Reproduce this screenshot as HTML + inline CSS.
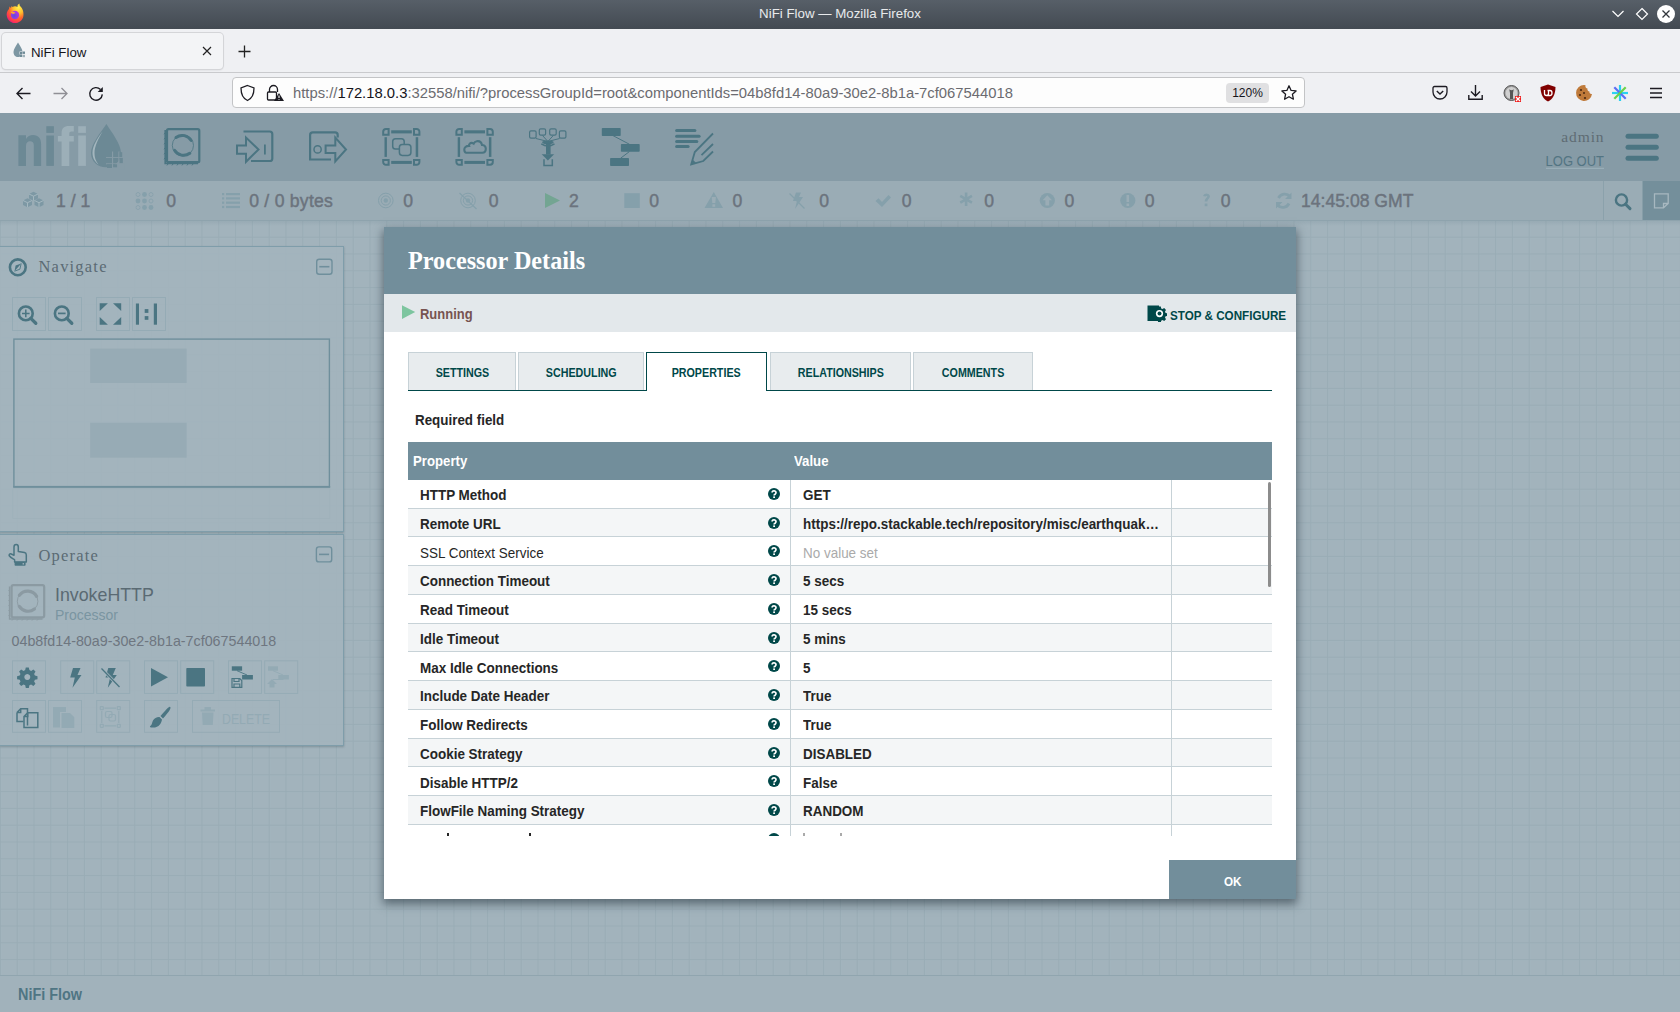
<!DOCTYPE html>
<html><head><meta charset="utf-8">
<style>
*{box-sizing:border-box;margin:0;padding:0}
html,body{width:1680px;height:1012px;overflow:hidden;background:#a2b3bc;font-family:"Liberation Sans",sans-serif}
.abs{position:absolute}
#titlebar{left:0;top:0;width:1680px;height:29px;background:linear-gradient(#575f68,#434a52)}
#titletext{left:0;top:0;width:1680px;height:29px;line-height:28px;text-align:center;color:#e8eaec;font-size:13.3px}
#tabstrip{left:0;top:29px;width:1680px;height:44px;background:#eff0f3;border-bottom:1px solid #c9cacd}
#tab{left:2px;top:33px;width:221px;height:36px;background:#f3f4f6;border-radius:4px;box-shadow:0 0 0 1px #d4d5d8,0 1px 2px rgba(0,0,0,.15)}
#navbar{left:0;top:73px;width:1680px;height:40px;background:#eff0f3}
#urlbar{left:232px;top:77px;width:1073px;height:31px;background:#fdfdfd;border:1px solid #c3c4c6;border-radius:4px}
#nifihdr{left:0;top:113px;width:1680px;height:68px;background:#869ba6}
#status{left:0;top:181px;width:1680px;height:40px;background:#9aacb5;border-bottom:1px solid #8ea3ad}
#canvas{left:0;top:221px;width:1680px;height:754px;background:#a2b3bc}
#footer{left:0;top:975px;width:1680px;height:37px;background:#a1b2bb;border-top:1px solid #90a5af}
.st{position:absolute;top:187px;height:28px;line-height:28px;font-size:18px;color:#6f7882;white-space:nowrap}
.panel{position:absolute;left:0;width:344px;background:#a3b4bd;border:1px solid #7f9eab;border-left:none}
.ptitle{position:absolute;font-family:"Liberation Serif",serif;font-size:16px;color:#5a6a73;letter-spacing:1px}
.nbtn{position:absolute;width:34px;height:34px;border:1px solid #95aab4}
#dialog{left:384px;top:227px;width:912px;height:672px;background:#fff;box-shadow:0 4px 9px 1px rgba(40,55,65,.6)}
#dhdr{left:0;top:0;width:912px;height:67px;background:#728e9b}
#dtitle{left:24px;top:0;height:67px;line-height:67px;color:#fff;font-family:"Liberation Serif",serif;font-weight:bold;font-size:24.2px}
#runbar{left:0;top:67px;width:912px;height:38px;background:#e3e8eb}
.tab{position:absolute;top:125px;height:38px;background:#e8ecee;border:1px solid #c7d2d7;border-bottom:none;color:#004849;font-size:13.4px;font-weight:bold;text-align:center;line-height:39px}
.tab span{display:inline-block;transform:scaleX(0.8)}
.tab.sel{background:#fff;border:1.5px solid #004849;border-bottom:none;height:39px;line-height:40.5px}
#tabline{left:24px;top:162.5px;width:864px;height:1.5px;background:#004849}
table{border-collapse:collapse}
#grid{left:24px;top:215px;width:864px}
.row{position:absolute;left:0;width:864px;height:28.76px;border-bottom:1px solid #c7d2d7;font-size:13.4px;color:#262626}
.row.even{background:#f4f6f7}
.pname{position:absolute;left:12px;top:1.2px;line-height:28px;font-weight:bold}
.pval{position:absolute;left:395px;top:1.2px;line-height:28px;font-weight:bold}
.help{position:absolute;left:360px;top:8px;width:12px;height:12px}
.pname,.pval{white-space:nowrap;font-size:14.4px;transform:scaleX(0.935);transform-origin:0 50%}
.nb{font-weight:normal!important}
.vdiv{position:absolute;top:0;width:1px;height:29px;background:#c7d2d7}
</style></head><body>
<!-- Firefox chrome -->
<div id="titlebar" class="abs"></div>
<div id="titletext" class="abs">NiFi Flow — Mozilla Firefox</div>
<div id="tabstrip" class="abs"></div>
<div id="tab" class="abs"></div>
<div id="navbar" class="abs"></div>
<div id="urlbar" class="abs"></div>
<!-- firefox logo -->
<svg class="abs" style="left:4px;top:3px" width="21" height="21" viewBox="0 0 21 21">
 <defs><radialGradient id="fxg" cx="0.7" cy="0.2" r="0.9"><stop offset="0" stop-color="#fff44f"/><stop offset="0.35" stop-color="#ffbd2e"/><stop offset="0.6" stop-color="#ff6a2a"/><stop offset="0.85" stop-color="#ff3750"/><stop offset="1" stop-color="#e31587"/></radialGradient>
 <radialGradient id="fxp" cx="0.4" cy="0.6" r="0.6"><stop offset="0" stop-color="#5b4ee0"/><stop offset="1" stop-color="#b833e1"/></radialGradient></defs>
 <path d="M16.5 3.5 C15.5 2.5 15 1.5 16 0.5 C13 1.5 13.5 3 13.5 4 C12 3 10 3 8.5 4 L7.5 3 L7 5 L5.5 3.5 L5 6 C2.8 8 2.2 11 3 14 C4.2 18 8 20.5 12 20 C16.5 19.5 19.5 16 19.5 11.5 C19.5 8 18.5 5.5 16.5 3.5 Z" fill="url(#fxg)"/>
 <circle cx="11" cy="12" r="4.2" fill="url(#fxp)"/>
 <path d="M6.5 9.5 C8 8.5 10 8.5 11.5 10 L9 11 Z" fill="#ffa436"/>
</svg>
<!-- tab contents -->
<svg class="abs" style="left:12px;top:42px" width="14" height="16" viewBox="0 0 14 16">
 <path d="M6 0.5 C4 4 1.5 7 1.5 10 C1.5 13 3.5 15 6 15 C8.5 15 10.5 13 10.5 10 C10.5 7 8 4 6 0.5Z" fill="#7d97a3"/>
 <rect x="7.5" y="9.5" width="3" height="3" fill="#eef0f3"/><rect x="8" y="10" width="2.2" height="2.2" fill="#6f8b97"/>
 <rect x="10.6" y="9.5" width="2.4" height="2.4" fill="#6f8b97"/><rect x="8" y="12.8" width="2.2" height="2.2" fill="#6f8b97"/><rect x="10.6" y="12.8" width="2.4" height="2.4" fill="#9fb1b9"/>
</svg>
<div class="abs" style="left:31px;top:43.5px;font-size:13.3px;color:#15141a;line-height:18px">NiFi Flow</div>
<svg class="abs" style="left:201px;top:45px" width="12" height="12" viewBox="0 0 12 12"><path d="M2 2 L10 10 M10 2 L2 10" stroke="#222" stroke-width="1.2"/></svg>
<svg class="abs" style="left:237px;top:44px" width="15" height="15" viewBox="0 0 15 15"><path d="M7.5 1.5 V13.5 M1.5 7.5 H13.5" stroke="#222" stroke-width="1.3"/></svg>
<!-- nav buttons -->
<svg class="abs" style="left:15px;top:85px" width="17" height="17" viewBox="0 0 17 17"><path d="M2 8.5 H15.5 M7.5 3 L2 8.5 L7.5 14" stroke="#1c1b22" stroke-width="1.4" fill="none"/></svg>
<svg class="abs" style="left:52px;top:85px" width="17" height="17" viewBox="0 0 17 17"><path d="M1.5 8.5 H15 M9.5 3 L15 8.5 L9.5 14" stroke="#8f8f95" stroke-width="1.3" fill="none"/></svg>
<svg class="abs" style="left:88px;top:85px" width="17" height="17" viewBox="0 0 17 17"><path d="M14.3 9.4 A6.3 6.3 0 1 1 12.5 4.5" stroke="#1c1b22" stroke-width="1.4" fill="none"/><path d="M14.8 1.9 V7 H9.7 Z" fill="#1c1b22"/></svg>
<!-- url bar contents -->
<svg class="abs" style="left:239px;top:84px" width="17" height="18" viewBox="0 0 17 18"><path d="M8.5 1.5 L15 4 C15 10 13 14.5 8.5 16.5 C4 14.5 2 10 2 4 Z" stroke="#1c1b22" stroke-width="1.3" fill="none"/></svg>
<svg class="abs" style="left:265px;top:84px" width="20" height="18" viewBox="0 0 20 18"><path d="M4.5 8 V5.5 A4 4 0 0 1 12.5 5.5 V8" stroke="#1c1b22" stroke-width="1.3" fill="none"/><rect x="2.5" y="8" width="9" height="8" rx="1" stroke="#1c1b22" stroke-width="1.3" fill="none"/><path d="M14 9 L19 17 H9 Z" fill="#1c1b22"/><path d="M14 11.5 V14 M14 15.2 V16" stroke="#fff" stroke-width="1.1"/></svg>
<div class="abs" style="left:293px;top:84px;font-size:14.8px;line-height:18px;color:#6b6b70;white-space:nowrap">https://<span style="color:#15141a">172.18.0.3</span>:32558/nifi/?processGroupId=root&amp;componentIds=04b8fd14-80a9-30e2-8b1a-7cf067544018</div>
<div class="abs" style="left:1226px;top:83px;width:43px;height:20px;background:#e0e0e2;border-radius:4px;font-size:12px;line-height:20px;text-align:center;color:#15141a">120%</div>
<svg class="abs" style="left:1280px;top:84px" width="18" height="18" viewBox="0 0 18 18"><path d="M9 1.8 L11.1 6.4 L16.1 6.9 L12.4 10.2 L13.4 15.2 L9 12.7 L4.6 15.2 L5.6 10.2 L1.9 6.9 L6.9 6.4 Z" stroke="#1c1b22" stroke-width="1.3" fill="none" stroke-linejoin="round"/></svg>
<!-- right toolbar icons -->
<svg class="abs" style="left:1432px;top:85px" width="16" height="16" viewBox="0 0 16 16"><path d="M2.5 1.5 H13.5 A1.5 1.5 0 0 1 15 3 V7 A7 7 0 0 1 1 7 V3 A1.5 1.5 0 0 1 2.5 1.5 Z" stroke="#1c1b22" stroke-width="1.3" fill="none"/><path d="M4.8 6 L8 9 L11.2 6" stroke="#1c1b22" stroke-width="1.4" fill="none"/></svg>
<svg class="abs" style="left:1467px;top:84px" width="17" height="17" viewBox="0 0 17 17"><path d="M8.5 1 V11.5 M4 7.5 L8.5 12 L13 7.5" stroke="#1c1b22" stroke-width="1.4" fill="none"/><path d="M1.8 11 V15.2 H15.2 V11" stroke="#1c1b22" stroke-width="1.4" fill="none"/></svg>
<svg class="abs" style="left:1503px;top:84px" width="18" height="18" viewBox="0 0 18 18"><circle cx="8.5" cy="9" r="7.5" fill="#9a9a9a" stroke="#555" stroke-width="1"/><circle cx="8.5" cy="9" r="6" fill="#d0d0d0"/><path d="M6 4 C6 7 11 7 11 4 L10 9 V15 H7 V9 Z" fill="#555"/><rect x="12" y="12" width="6" height="6" fill="#e22"/><path d="M13 13 L17 17 M17 13 L13 17" stroke="#fff" stroke-width="1.2"/></svg>
<svg class="abs" style="left:1540px;top:84px" width="16" height="18" viewBox="0 0 16 18"><path d="M8 0.5 L15.5 3 C15.5 10 13 15 8 17.5 C3 15 0.5 10 0.5 3 Z" fill="#800000"/><path d="M4.5 6 V9.5 A2 2 0 0 0 8.5 9.5 V6 M7.5 6.5 H10 A2 2.5 0 0 1 10 11.5 H7.5" stroke="#fff" stroke-width="1.3" fill="none"/></svg>
<svg class="abs" style="left:1575px;top:84px" width="18" height="18" viewBox="0 0 18 18"><path d="M9 1 A8 8 0 1 0 17 10 C15.5 10.5 14 9 14.5 7.5 C13 7.5 12 6 12.5 4.5 C11 4.5 10 3 10.5 1.2 Z" fill="#bf7a3a"/><circle cx="6" cy="6" r="1.1" fill="#4a2a12"/><circle cx="5" cy="11" r="1.1" fill="#4a2a12"/><circle cx="9" cy="9" r="1" fill="#4a2a12"/><circle cx="10" cy="14" r="1.1" fill="#4a2a12"/></svg>
<svg class="abs" style="left:1611px;top:84px" width="18" height="18" viewBox="0 0 18 18"><path d="M9 1 V17" stroke="#29d0ef" stroke-width="2.2"/><path d="M1 9 H17" stroke="#2bd2f0" stroke-width="2.2"/><path d="M3.3 3.3 L14.7 14.7" stroke="#5b6ef5" stroke-width="2.2"/><path d="M14.7 3.3 L3.3 14.7" stroke="#6bd24a" stroke-width="2.2"/></svg>
<svg class="abs" style="left:1648px;top:85px" width="16" height="16" viewBox="0 0 16 16"><path d="M2 3.5 H14 M2 8 H14 M2 12.5 H14" stroke="#1c1b22" stroke-width="1.4"/></svg>
<!-- window controls -->
<svg class="abs" style="left:1611px;top:8px" width="14" height="12" viewBox="0 0 14 12"><path d="M1.5 3 L7 8.5 L12.5 3" stroke="#fff" stroke-width="1.2" fill="none"/></svg>
<svg class="abs" style="left:1635px;top:7px" width="14" height="14" viewBox="0 0 14 14"><path d="M7 1.5 L12.5 7 L7 12.5 L1.5 7 Z" stroke="#fff" stroke-width="1.2" fill="none"/></svg>
<svg class="abs" style="left:1657px;top:5px" width="18" height="18" viewBox="0 0 18 18"><circle cx="9" cy="9" r="9" fill="#fff"/><path d="M5.5 5.5 L12.5 12.5 M12.5 5.5 L5.5 12.5" stroke="#31363b" stroke-width="1.3"/></svg>

<!-- NiFi -->
<div id="nifihdr" class="abs"></div>
<svg class="abs" style="left:0;top:113px" width="1680" height="68" viewBox="0 113 1680 68">
 <g fill="#6c8995">
  <path d="M18.4 165.9 V135.2 H26 V139 C27.5 136.2 30 135 33 135 C38.5 135 41.1 138.5 41.1 144 V165.9 H33.8 V145.5 C33.8 142.5 32.5 141.2 30 141.2 C27.6 141.2 26 142.8 26 145.8 V165.9 Z"/>
  <rect x="46.3" y="126.2" width="7.6" height="6.7"/><rect x="46.3" y="135.5" width="7.6" height="30.4"/>
 </g>
 <g fill="#9cafb8">
  <path d="M61.6 165.9 V141.4 H57.9 V135.9 H61.6 V133 C61.6 128 64 125.9 69 125.9 H73.8 V131.5 H71.5 C70 131.5 69.3 132.2 69.3 133.8 V135.9 H73.8 V141.4 H69.3 V165.9 Z"/>
  <rect x="78.2" y="126.2" width="7.7" height="6.7"/><rect x="78.2" y="135.5" width="7.7" height="30.4"/>
 </g>
 <path d="M106.4 124 C101 132 91 144 91 153 C91 161.5 97.5 167.3 106 167.3 C114.5 167.3 121 161.5 121 153 C121 144 111.5 132 106.4 124 Z" fill="#6c8995"/>
 <path d="M102.5 131.5 C97 139 92.5 146 92.5 153 C92.5 158 95 162 98.5 164.5 C95.5 161 94.5 157 94.5 153 C94.5 146.5 98 139.5 102.5 131.5 Z" fill="#a4b6be"/>
 <g fill="#869ba6"><rect x="112" y="151.5" width="1.1" height="17.5"/><rect x="118.4" y="151.5" width="1.1" height="17.5"/><rect x="106" y="157" width="18" height="0.9"/><rect x="106" y="163.3" width="18" height="1"/><rect x="118.4" y="163.3" width="6" height="6"/><rect x="106" y="168" width="7" height="1.5"/></g>
 <g fill="#6c8995"><rect x="119.5" y="152.2" width="2.7" height="4.8"/><rect x="119.5" y="157.9" width="3.3" height="5.2"/><rect x="107" y="164.3" width="5" height="3.7"/><rect x="113.1" y="164.3" width="4" height="3"/></g>

 <g stroke="#4b7582" fill="none" stroke-width="2.2">
  <!-- processor -->
  <rect x="167" y="129.2" width="32.3" height="33" rx="1.5"/>
  <path d="M165.2 130 V163.5 H198" stroke-width="1.6"/>
  <path d="M165 133 l-1 1.2 M165 138 l-1 1.2 M165 143 l-1 1.2 M165 148 l-1 1.2 M165 153 l-1 1.2 M165 158 l-1 1.2 M168 164 l-1 1.4 M173 164 l-1 1.4 M178 164 l-1 1.4 M183 164 l-1 1.4 M188 164 l-1 1.4 M193 164 l-1 1.4" stroke-width="1"/>
  <circle cx="182.9" cy="145.4" r="10.6" stroke-width="0.8"/>
  <path d="M176 137.5 A10.5 10.5 0 0 1 191.2 140.5" stroke-width="3" stroke-linecap="round"/>
  <path d="M189.8 153.3 A10.5 10.5 0 0 1 174.6 150.3" stroke-width="3" stroke-linecap="round"/>
  <!-- input port -->
  <path d="M243.5 131.5 H269.7 A2.6 2.6 0 0 1 272.3 134.1 V158.4 A2.6 2.6 0 0 1 269.7 161 H251"/>
  <path d="M237 145.5 H246 V137.5 L258.5 149.5 L246 161.8 V153.7 H237 Z" stroke-width="2"/>
  <path d="M264.9 144.5 V154.5" stroke-width="1.8"/>
  <!-- output port -->
  <path d="M337.7 137.5 V135 A2.6 2.6 0 0 0 335.1 132.4 H312.7 A2.6 2.6 0 0 0 310.1 135 V159.5 H331"/>
  <circle cx="317.6" cy="149.4" r="3.6" stroke-width="1.5"/>
  <path d="M325.6 145.6 H335.3 V137.5 L346 149.5 L335.3 161.5 V153 H325.6 Z" stroke-width="2"/>
  <!-- process group inner squares -->
  <rect x="392.7" y="138.8" width="11.5" height="10.2" rx="2.8" stroke-width="1.5"/>
  <rect x="399.4" y="144.4" width="11.5" height="11" rx="2.8" stroke-width="1.5" fill="#869ba6"/>
  <!-- cloud -->
  <path d="M466.3 152.7 H482.3 C484.6 152.7 485.8 150.9 485.8 148.8 C485.8 146.5 484.2 144.9 482 145 C481.5 142.2 479.2 140.9 476.8 141.2 C475 141.5 474.2 142.6 473.7 143.6 C472.2 142.6 470.7 142.8 469.7 143.8 C469 144.5 468.9 145.3 469.1 145.9 C465.9 145.8 464.3 147.7 464.3 149.6 C464.3 151.4 465.2 152.7 466.3 152.7 Z" stroke-width="2.1"/>
  <!-- funnel -->
  <rect x="529.6" y="130.8" width="6.5" height="7.4" rx="1.4" stroke-width="1.2"/>
  <rect x="539.3" y="128.9" width="6.3" height="6.2" rx="1.4" stroke-width="1.2"/>
  <rect x="549.7" y="128.9" width="6.5" height="6.2" rx="1.4" stroke-width="1.2"/>
  <rect x="559.4" y="130.8" width="6.5" height="7.4" rx="1.4" stroke-width="1.2"/>
  <path d="M536 138.5 L547.9 141.5 L542.5 135.5 M553.3 135.5 L547.9 141.5 L559.6 138.5" stroke-width="1"/>
  <path d="M541.3 143.8 Q547.9 148 554.5 143.8" stroke-width="1.5"/>
  <path d="M544 159.3 V165.5 H552.3 V159.3" stroke-width="1.5"/>
  <!-- template lines -->
  <path d="M612.8 135.5 L629.5 144.3 M629.5 151.5 L620.5 158.3" stroke-width="1"/>
  <!-- label pencil -->
  <path d="M713 133.5 L694.8 152 L691.2 164.4 L703.3 161 L713 151.5 M701.5 155.2 L713 144" stroke-width="1.8"/>
 </g>
 <g fill="#4b7582">
  <!-- PG frame -->
  <path fill="none" stroke="#4b7582" stroke-width="2" d="M383.2 134.8 V131.8 A2.8 2.8 0 0 1 386.0 129 H388.59999999999997 V134.8 Z M414.0 129 H416.59999999999997 A2.8 2.8 0 0 1 419.4 131.8 V134.8 H414.0 Z M383.2 160 H388.59999999999997 V164.8 H386.0 A2.8 2.8 0 0 1 383.2 162 Z M414.0 160 H419.4 V162 A2.8 2.8 0 0 1 416.59999999999997 164.8 H414.0 Z"/>
  <rect x="391.2" y="130.3" width="20.6" height="3.1"/><rect x="391.2" y="160.9" width="20.6" height="3"/>
  <rect x="384.5" y="137.2" width="2.4" height="19.7"/><rect x="415.7" y="137.2" width="2.5" height="19.7"/>
  <!-- RPG frame -->
  <path fill="none" stroke="#4b7582" stroke-width="2" d="M456.4 134.8 V131.8 A2.8 2.8 0 0 1 459.2 129 H461.79999999999995 V134.8 Z M487.40000000000003 129 H490.0 A2.8 2.8 0 0 1 492.8 131.8 V134.8 H487.40000000000003 Z M456.4 160 H461.79999999999995 V164.8 H459.2 A2.8 2.8 0 0 1 456.4 162 Z M487.40000000000003 160 H492.8 V162 A2.8 2.8 0 0 1 490.0 164.8 H487.40000000000003 Z"/>
  <rect x="464.4" y="130.3" width="20.6" height="3.1"/><rect x="464.4" y="160.9" width="20.6" height="3"/>
  <rect x="457.7" y="137.2" width="2.4" height="19.7"/><rect x="488.9" y="137.2" width="2.5" height="19.7"/>
  <!-- funnel body -->
  <ellipse cx="547.9" cy="142.3" rx="5.8" ry="1.9"/>
  <rect x="546" y="143.5" width="4.6" height="11"/>
  <path d="M541.7 154.2 H554.1 L547.9 160.6 Z"/>
  <!-- template rects -->
  <rect x="601.8" y="128" width="18.9" height="8" rx="0.8"/>
  <rect x="620.9" y="144" width="18.8" height="7.7" rx="0.8"/>
  <rect x="610.1" y="158" width="18.9" height="8" rx="0.8"/>
  <!-- label lines -->
  <rect x="675.1" y="129.1" width="21.3" height="3" rx="1.5"/>
  <rect x="675.1" y="134.7" width="25.5" height="3" rx="1.5"/>
  <rect x="675.1" y="139.9" width="23.2" height="3" rx="1.5"/>
  <rect x="675.1" y="144.9" width="14.5" height="3" rx="1.5"/>
  <path d="M691.2 164.6 L692.5 159.5 L696 162.8 Z"/>
 </g>
 <!-- user -->
 <text x="1604.5" y="142" text-anchor="end" font-family="Liberation Serif" font-size="15.5" letter-spacing="0.9" fill="#5f6c74">admin</text>
 <text x="1604" y="166.3" text-anchor="end" font-family="Liberation Sans" font-size="14.2" fill="#537583" transform="translate(1604 0) scale(0.915 1) translate(-1604 0)">LOG OUT</text>
 <rect x="1546" y="167.8" width="58" height="1" fill="#9fb3bc"/>
 <g fill="#4b7582"><rect x="1625.5" y="133.7" width="33.3" height="5" rx="2.5"/><rect x="1625.5" y="144.8" width="33.3" height="5" rx="2.5"/><rect x="1625.5" y="155.8" width="33.3" height="5" rx="2.5"/></g>
</svg>
<div id="status" class="abs"></div>
<div id="canvas" class="abs"></div>
<svg class="abs" style="left:0;top:221px" width="1680" height="754" viewBox="0 221 1680 754">
 <defs><pattern id="gridp" x="16.7" y="236.7" width="16.8" height="16.8" patternUnits="userSpaceOnUse">
  <rect x="0" y="0" width="1" height="16.8" fill="#99acb5"/><rect x="0" y="0" width="16.8" height="1" fill="#99acb5"/>
 </pattern>
 <linearGradient id="topsh" x1="0" y1="0" x2="0" y2="1"><stop offset="0" stop-color="#7f95a0" stop-opacity="0.3"/><stop offset="1" stop-color="#7f95a0" stop-opacity="0"/></linearGradient></defs>
 <rect x="0" y="221" width="1680" height="754" fill="url(#gridp)"/>
 <rect x="0" y="221" width="1680" height="5" fill="url(#topsh)"/>
</svg>
<svg class="abs" style="left:0;top:181px" width="1680" height="39" viewBox="0 181 1680 39">
 <g fill="#6b737d" stroke="#6b737d" stroke-width="0.45" font-family="Liberation Sans" font-size="17.6">
  <text x="56" y="206.6">1 / 1</text>
  <text x="166.2" y="206.6">0</text>
  <text x="249.2" y="206.6" letter-spacing="0.25">0 / 0 bytes</text>
  <text x="403.2" y="206.6">0</text>
  <text x="488.7" y="206.6">0</text>
  <text x="569" y="206.6">2</text>
  <text x="649.2" y="206.6">0</text>
  <text x="732.5" y="206.6">0</text>
  <text x="819.2" y="206.6">0</text>
  <text x="901.7" y="206.6">0</text>
  <text x="984.2" y="206.6">0</text>
  <text x="1064.4" y="206.6">0</text>
  <text x="1144.7" y="206.6">0</text>
  <text x="1220.7" y="206.6">0</text>
  <text x="1301" y="206.6">14:45:08 GMT</text>
 </g>
 <g fill="#7d98a4" stroke="none">
  <!-- cubes -->
  <path d="M29 194 L33.5 191.8 L38 194 V198.5 L33.5 200.7 L29 198.5 Z"/>
  <path d="M23 200.5 L27.5 198.3 L32 200.5 V205 L27.5 207.2 L23 205 Z"/>
  <path d="M34.5 200.5 L39 198.3 L43.5 200.5 V205 L39 207.2 L34.5 205 Z"/>
 </g>
 <g stroke="#a8bac2" stroke-width="0.9" fill="none">
  <path d="M29 194 L33.5 196.2 L38 194 M33.5 196.2 V200.7 M23 200.5 L27.5 202.7 L32 200.5 M27.5 202.7 V207.2 M34.5 200.5 L39 202.7 L43.5 200.5 M39 202.7 V207.2"/>
 </g>
 <g fill="#85a0ab">
  <!-- dots grid -->
  <circle cx="144.5" cy="194.5" r="2.4"/><circle cx="138" cy="201" r="2.4"/><circle cx="144.5" cy="201" r="2.4"/><circle cx="144.5" cy="207.5" r="2.4"/><circle cx="151" cy="207.5" r="2.4"/>
  <!-- list -->
  <rect x="222" y="193" width="2.2" height="2.2"/><rect x="222" y="197.3" width="2.2" height="2.2"/><rect x="222" y="201.6" width="2.2" height="2.2"/><rect x="222" y="205.9" width="2.2" height="2.2"/>
  <rect x="226" y="193" width="14" height="2.2"/><rect x="226" y="197.3" width="14" height="2.2"/><rect x="226" y="201.6" width="14" height="2.2"/><rect x="226" y="205.9" width="14" height="2.2"/>
  <!-- play -->
  <path d="M545 193 L560 200.5 L545 208 Z" fill="#73a592"/>
  <!-- stop -->
  <rect x="624.3" y="193.2" width="15.5" height="14.8"/>
  <!-- warning -->
  <path d="M713.8 192 L723 208 H704.5 Z"/>
  <!-- check -->
  <path d="M875.5 201 L878.5 198.3 L882 202 L888.5 195 L891 197.5 L882 207 Z"/>
  <!-- upcircle -->
  <circle cx="1047.3" cy="200.5" r="7.6"/>
  <!-- excl circle -->
  <circle cx="1127.8" cy="200.5" r="7.6"/>
 </g>
 <g fill="none" stroke="#85a0ab">
  <circle cx="138" cy="194.5" r="2" stroke-width="0.8"/><circle cx="151" cy="194.5" r="2" stroke-width="0.8"/><circle cx="151" cy="201" r="2" stroke-width="0.8"/><circle cx="138" cy="207.5" r="2" stroke-width="0.8"/>
  <circle cx="385.8" cy="200.5" r="7.3" stroke-width="1"/><circle cx="385.8" cy="200.5" r="4.6" stroke-width="1"/>
  <circle cx="468" cy="200.5" r="7.3" stroke-width="1"/><circle cx="468" cy="200.5" r="4.6" stroke-width="1"/>
  <path d="M459.5 193 L476.5 209" stroke-width="1.2"/>
  <path d="M789.5 193.5 L804.5 208.5" stroke-width="1.2"/>
  <path d="M1278.5 198 A7 7 0 0 1 1290 196.5 M1289 203.5 A7 7 0 0 1 1277.5 205" stroke-width="2.8"/>
 </g>
 <g fill="#85a0ab">
  <circle cx="385.8" cy="200.5" r="2.2"/><circle cx="468" cy="200.5" r="2.2"/>
  <path d="M796 192.5 H801 L799 197 H803 L795 209 L797 201 H793 Z"/>
  <path d="M964.8 192.5 h2.6 v4.5 l3.9-2.2 1.3 2.2 -3.9 2.3 3.9 2.2 -1.3 2.2 -3.9 -2.2 v4.5 h-2.6 v-4.5 l-3.9 2.2 -1.3-2.2 3.9-2.2 -3.9-2.3 1.3-2.2 3.9 2.2 Z"/>
  <path d="M1203 196 A3.6 3.4 0 0 1 1210 196 C1210 198.5 1207.5 199 1207.3 201.5 H1204.7 C1204.7 198.5 1207.3 198 1207.3 196.3 A1.3 1.3 0 0 0 1205.4 196.5 Z"/><rect x="1204.7" y="203.5" width="2.7" height="2.7"/>
  <path d="M1291.5 192.5 V199 H1285 Z M1276 208.5 V202 H1282.5 Z"/>
 </g>
 <g fill="#9aacb5">
  <path d="M1047.3 195.3 L1052 200.3 H1049.2 V205.5 H1045.4 V200.3 H1042.6 Z"/>
  <rect x="1126.5" y="195" width="2.6" height="7"/><rect x="1126.5" y="203.5" width="2.6" height="2.5"/>
  <path d="M711.7 197 H715.9 L715.3 203 H712.3 Z"/><rect x="712.4" y="204.3" width="2.8" height="2.5"/>
 </g>
 <!-- right side -->
 <rect x="1603" y="181" width="1" height="39" fill="#8ba1ab"/>
 <rect x="1642.5" y="181" width="37.5" height="39" fill="#748f9b"/>
 <g fill="none" stroke="#4b7582" stroke-width="2.4"><circle cx="1621.5" cy="200" r="5.6"/><path d="M1625.6 204.2 L1630 208.6" stroke-width="3" stroke-linecap="round"/></g>
 <path d="M1654.5 193.8 H1668.2 V203.5 L1663.5 207.8 H1654.5 Z M1668.2 203.5 H1663.5 V207.8" fill="none" stroke="#a7b8c0" stroke-width="1.3"/>
</svg>
<div id="footer" class="abs"></div>
<div class="abs" style="left:18px;top:984.5px;font-size:16px;font-weight:bold;color:#4f7583;line-height:20px;transform:scaleX(0.9);transform-origin:0 0">NiFi Flow</div>
<!-- Navigate / Operate panels -->
<div class="abs" style="left:0;top:246px;width:344px;height:286px;background:rgba(163,180,189,0.88);border:1px solid #7f9daa;border-left:none;box-shadow:0 1px 2px rgba(60,80,90,.35)"></div>
<div class="abs" style="left:0;top:534px;width:344px;height:212px;background:rgba(163,180,189,0.88);border:1px solid #7f9daa;border-left:none;box-shadow:0 1px 2px rgba(60,80,90,.35)"></div>
<svg class="abs" style="left:0;top:246px" width="345" height="500" viewBox="0 246 345 500">
 <g font-family="Liberation Serif" font-size="16.5" fill="#5b6b74" letter-spacing="1.2">
  <text x="38.5" y="272">Navigate</text>
  <text x="38.5" y="560.8">Operate</text>
 </g>
 <!-- compass -->
 <circle cx="17.8" cy="267.3" r="7.9" fill="none" stroke="#4b7582" stroke-width="2.6"/>
 <path d="M21.2 263.4 L15.6 265.6 L14.5 271.2 Z" fill="#4b7582"/>
 <path d="M21.2 263.4 L19.9 269.2 L14.5 271.2" fill="none" stroke="#4b7582" stroke-width="0.9"/>
 <!-- collapse buttons -->
 <g fill="none" stroke="#6f8f9c" stroke-width="1.4">
  <rect x="316.7" y="259.2" width="15.3" height="15" rx="2.5"/><path d="M319.3 266.7 H329.4" stroke-width="1.6"/>
  <rect x="316.4" y="546.9" width="15.3" height="15" rx="2.5"/><path d="M319 554.4 H329.1" stroke-width="1.6"/>
 </g>
 <!-- nav buttons -->
 <g fill="none" stroke="#95abb5" stroke-width="1">
  <rect x="12.5" y="297.5" width="33" height="33"/><rect x="48.5" y="297.5" width="33" height="33"/>
  <rect x="96.5" y="297.5" width="33" height="33"/><rect x="132.5" y="297.5" width="33" height="33"/>
 </g>
 <g fill="none" stroke="#4b7582">
  <circle cx="25.8" cy="313.4" r="6.9" stroke-width="2.6"/><path d="M30.8 318.4 L35.8 323.3" stroke-width="3.3" stroke-linecap="round"/><path d="M25.8 309.6 V317.2 M22 313.4 H29.6" stroke-width="1.5"/>
  <circle cx="61.8" cy="313.4" r="6.9" stroke-width="2.6"/><path d="M66.8 318.4 L71.8 323.3" stroke-width="3.3" stroke-linecap="round"/><path d="M58 313.4 H65.6" stroke-width="1.7"/>
 </g>
 <g fill="#4b7582">
  <path d="M99.7 303.2 H107.9 L99.7 311 Z M113 303.2 H121.2 V311 Z M99.7 317 L107.9 324.8 H99.7 Z M121.2 317 V324.8 H113 Z"/>
  <rect x="135.9" y="303.5" width="3.1" height="21.2"/><rect x="153.8" y="303.5" width="3.2" height="21.2"/>
  <rect x="144.7" y="309.1" width="3.7" height="3.8"/><rect x="144.7" y="316.1" width="3.7" height="3.7"/>
 </g>
 <!-- minimap -->
 <rect x="13.9" y="339.1" width="315.5" height="147.5" fill="none" stroke="#6f8f9c" stroke-width="1.4"/>
 <rect x="13.2" y="486" width="317" height="1.8" fill="#6f8f9c"/>
 <rect x="90.2" y="348.6" width="96.4" height="34.4" fill="#97abb5"/>
 <rect x="90.2" y="422.7" width="96.4" height="35" fill="#97abb5"/>
 <rect x="12.8" y="488.6" width="317" height="30" fill="none" stroke="#9eb1ba" stroke-width="0.8"/>
 <!-- hand icon -->
 <path d="M14.6 562 V559.8 C12.5 558.5 10.5 557.5 9.3 555.8 C8.6 554.6 9.8 553.5 11.2 554 L14 555.2 V547 C14 545.2 15.2 544.6 16.2 544.6 C17.3 544.6 18.3 545.3 18.3 547 V551.5 L24.5 552.6 C25.7 552.9 26.3 553.6 26.3 555 V562 Z" fill="none" stroke="#4b7582" stroke-width="1.5" stroke-linejoin="round"/>
 <rect x="14.6" y="561.8" width="11" height="4" rx="0.8" fill="#4b7582"/><rect x="22.6" y="563.1" width="1.4" height="1.4" fill="#a3b4bd"/>
 <!-- processor icon operate -->
 <g fill="none" stroke="#8b9aa2">
  <rect x="11.6" y="585.2" width="32.6" height="32.2" rx="1.8" stroke-width="2.2"/>
  <path d="M9.6 586.5 V619 H42.5" stroke-width="1.5"/>
  <path d="M9.5 590 l-1 1 M9.5 595 l-1 1 M9.5 600 l-1 1 M9.5 605 l-1 1 M9.5 610 l-1 1 M9.5 615 l-1 1 M13 619.3 l-1 1.2 M18 619.3 l-1 1.2 M23 619.3 l-1 1.2 M28 619.3 l-1 1.2 M33 619.3 l-1 1.2 M38 619.3 l-1 1.2" stroke-width="1"/>
  <circle cx="27.6" cy="601.3" r="10.3" stroke-width="0.9"/>
  <path d="M19.4 595.3 A10.3 10.3 0 0 1 36.6 596.4" stroke-width="3.2" stroke-linecap="round"/>
  <path d="M34.4 609 A10.3 10.3 0 0 1 19.3 606.4" stroke-width="3.2" stroke-linecap="round"/>
 </g>
 <text x="55" y="600.7" font-family="Liberation Sans" font-size="17.8" fill="#5a6a73">InvokeHTTP</text>
 <text x="55" y="619.6" font-family="Liberation Sans" font-size="14" fill="#7a95a1">Processor</text>
 <text x="11.5" y="645.7" font-family="Liberation Sans" font-size="14.3" fill="#6e7680">04b8fd14-80a9-30e2-8b1a-7cf067544018</text>
 <!-- operate buttons -->
 <g fill="none" stroke="#95abb5" stroke-width="1">
  <rect x="12.5" y="660.8" width="33" height="32.6"/><rect x="60.7" y="660.8" width="33" height="32.6"/><rect x="96.7" y="660.8" width="33" height="32.6"/>
  <rect x="144.5" y="660.8" width="33" height="32.6"/><rect x="180.7" y="660.8" width="33" height="32.6"/>
  <rect x="228.5" y="660.8" width="33" height="32.6"/><rect x="264.7" y="660.8" width="33" height="32.6"/>
  <rect x="12.5" y="700.5" width="33" height="31.8"/><rect x="48.5" y="700.5" width="33" height="31.8"/><rect x="96.7" y="700.5" width="33" height="31.8"/>
  <rect x="144.5" y="700.5" width="33" height="31.8"/><rect x="192.5" y="700.5" width="87" height="31.8"/>
 </g>
 <g fill="#4b7582">
  <!-- gear -->
  <path d="M25.8 667.5 h3 l0.6 2.6 1.7 0.8 2.3-1.4 2.1 2.1 -1.4 2.3 0.8 1.7 2.6 0.6 v3 l-2.6 0.6 -0.8 1.7 1.4 2.3 -2.1 2.1 -2.3-1.4 -1.7 0.8 -0.6 2.6 h-3 l-0.6-2.6 -1.7-0.8 -2.3 1.4 -2.1-2.1 1.4-2.3 -0.8-1.7 -2.6-0.6 v-3 l2.6-0.6 0.8-1.7 -1.4-2.3 2.1-2.1 2.3 1.4 1.7-0.8 Z M27.3 674 a3 3 0 1 0 0.01 0 Z" fill-rule="evenodd"/>
  <!-- bolt -->
  <path d="M73 668 H80.5 L77.5 675 H81.5 L72.5 687.8 L74.8 677.5 H70.2 Z"/>
  <path d="M108.3 668 H115.8 L112.8 675 H116.8 L107.8 687.8 L110.1 677.5 H105.5 Z"/>
  <!-- play / stop -->
  <path d="M151 668 L168 677.3 L151 686.6 Z"/>
  <rect x="186.3" y="668" width="18.7" height="18.6" rx="0.8"/>
  <!-- template save -->
  <rect x="231.8" y="666.3" width="10.3" height="4.4"/><rect x="242.1" y="675" width="10.8" height="4.5"/>
  <!-- brush -->
  <path d="M170.2 707 C171.5 708 169 712 163 718.5 L160.5 716 C166 710 169 706 170.2 707 Z"/>
  <path d="M159.5 717 L162 719.5 C161.5 723 159 728.5 151 727.5 C150 727.3 149.5 726.5 150.3 726 C152 725 152 722.5 153 720.5 C154.3 718 157 716.8 159.5 717 Z"/>
 </g>
 <path d="M101.5 668.5 L119.5 687" stroke="#a3b4bd" stroke-width="3"/><path d="M101.5 668.5 L119.5 687" stroke="#4b7582" stroke-width="1.3"/>
 <path d="M237 670.7 L247 675" stroke="#4b7582" stroke-width="0.9"/>
 <path d="M232 678.5 H239.8 L241.8 680.5 V687.4 H232 Z M234 678.5 V681.5 H239 V678.5 M234 687.4 V684 H239.8 V687.4" fill="none" stroke="#4b7582" stroke-width="1.2"/>
 <!-- copy -->
 <path d="M17 712.5 L20.7 708.8 H27.5 V725.5 M17 712.5 V721.5 H23.5 M17 712.5 H20.7 V708.8" fill="none" stroke="#4b7582" stroke-width="1.5"/>
 <path d="M24 716.5 L27.7 712.8 H37.8 V727.5 H24 Z M24 716.5 H27.7 V712.8" fill="none" stroke="#4b7582" stroke-width="1.5"/>
 <!-- faded icons -->
 <g fill="#93aab4">
  <rect x="268" y="666.3" width="10" height="4.4"/><rect x="278.3" y="675" width="10.6" height="4.5"/>
  <path d="M272 679 L277 684 H274.5 V687.5 H269.5 V684 H267 Z"/>
  <path d="M53 707 H66 V712 H60 V727.5 H53 Z"/>
  <path d="M61.5 713 H70 L74.3 717.3 V728 H61.5 Z"/>
  <path d="M200.5 709.5 H215 V711.5 H200.5 Z M204.5 707 H211 V709.5 H204.5 Z M202 712.5 H213.5 L212.8 725 H202.7 Z"/>
 </g>
 <path d="M273 679.5 H283.5" stroke="#93aab4" stroke-width="1"/>
 <path d="M273 670.7 L283 675" stroke="#93aab4" stroke-width="0.9"/>
 <g fill="none" stroke="#93aab4" stroke-width="1.2">
  <rect x="100.3" y="706.7" width="3" height="3" rx="0.5"/><rect x="117.3" y="706.7" width="3" height="3" rx="0.5"/><rect x="100.3" y="724.3" width="3" height="3" rx="0.5"/><rect x="117.3" y="724.3" width="3" height="3" rx="0.5"/>
  <path d="M104.5 708.2 H116 M104.5 725.8 H116 M101.8 711 V723 M118.8 711 V723"/>
  <rect x="105.5" y="711.5" width="6.5" height="6" rx="1.5"/><rect x="109" y="714.5" width="6.5" height="6.5" rx="1.5"/>
 </g>
 <text x="222" y="723.8" font-family="Liberation Sans" font-size="14" fill="#93aab4" transform="translate(222 0) scale(0.88 1) translate(-222 0)">DELETE</text>
</svg>

<div id="dialog" class="abs">
  <div id="dhdr" class="abs"><div id="dtitle" class="abs">Processor Details</div></div>
  <div id="runbar" class="abs"></div>
  <svg class="abs" style="left:18px;top:78px" width="14" height="15" viewBox="0 0 14 15"><path d="M0 0.2 L13.2 7.1 L0 14 Z" fill="#7dc59f"/></svg>
  <div class="abs" style="left:36px;top:77.5px;font-size:14.2px;font-weight:bold;color:#775351;line-height:18px;transform:scaleX(0.915);transform-origin:0 0">Running</div>
  <svg class="abs" style="left:763px;top:78px" width="20" height="17" viewBox="0 0 20 17"><path d="M0.5 0.5 H12 V16 H0.5 Z" fill="#004849"/><path d="M11.2 1.6 h2.6 l0.4 1.9 1.3 0.6 1.7 -1 1.8 1.8 -1 1.7 0.6 1.3 1.9 0.4 v2.6 l-1.9 0.4 -0.6 1.3 1 1.7 -1.8 1.8 -1.7 -1 -1.3 0.6 -0.4 1.9 h-2.6 l-0.4 -1.9 -1.3 -0.6 -1.7 1 -1.8 -1.8 1 -1.7 -0.6 -1.3 -1.9 -0.4 v-2.6 l1.9 -0.4 0.6 -1.3 -1 -1.7 1.8 -1.8 1.7 1 1.3 -0.6 Z" fill="#004849"/><circle cx="12.5" cy="8.6" r="3.6" fill="#fff"/><circle cx="12.5" cy="8.6" r="2" fill="#004849"/></svg>
  <div class="abs" style="left:786px;top:79.5px;font-size:13.4px;font-weight:bold;color:#004849;line-height:18px;white-space:nowrap;transform:scaleX(0.87);transform-origin:0 0">STOP &amp; CONFIGURE</div>
  <div class="tab" style="left:24px;width:108px"><span>SETTINGS</span></div>
  <div class="tab" style="left:134px;width:126px"><span>SCHEDULING</span></div>
  <div class="tab" style="left:386px;width:141px"><span>RELATIONSHIPS</span></div>
  <div class="tab" style="left:529px;width:120px"><span>COMMENTS</span></div>
  <div id="tabline" class="abs"></div>
  <div class="tab sel" style="left:262px;width:121px"><span>PROPERTIES</span></div>
  <div class="abs" style="left:31px;top:183px;font-size:14.4px;font-weight:bold;color:#262626;line-height:20px;transform:scaleX(0.93);transform-origin:0 0">Required field</div>
  <div class="abs" style="left:24px;top:215px;width:864px;height:38px;background:#728e9b"></div>
  <div class="abs" style="left:29px;top:223.5px;font-size:14.2px;font-weight:bold;color:#fff;line-height:20px;transform:scaleX(0.93);transform-origin:0 0">Property</div>
  <div class="abs" style="left:410px;top:223.5px;font-size:14.2px;font-weight:bold;color:#fff;line-height:20px;transform:scaleX(0.93);transform-origin:0 0">Value</div>
  <div class="abs" style="left:24px;top:253px;width:864px;height:356px;overflow:hidden">
<div class="row" style="top:-0.20px;background:#ffffff"><div class="pname" style="font-weight:bold;color:#262626">HTTP Method</div><div class="pval" style="font-weight:bold;color:#262626">GET</div><svg class="help" viewBox="0 0 12 12"><circle cx="6" cy="6" r="6" fill="#004849"/><path d="M4.1 4.6 A1.95 1.8 0 1 1 7.4 5.9 C6.6 6.4 6.1 6.7 6.1 7.6" stroke="#fff" stroke-width="1.7" fill="none"/><rect x="5.2" y="8.4" width="1.8" height="1.6" fill="#fff"/></svg></div>
<div class="row" style="top:28.56px;background:#f4f6f7"><div class="pname" style="font-weight:bold;color:#262626">Remote URL</div><div class="pval" style="font-weight:bold;color:#262626">https://repo.stackable.tech/repository/misc/earthquak…</div><svg class="help" viewBox="0 0 12 12"><circle cx="6" cy="6" r="6" fill="#004849"/><path d="M4.1 4.6 A1.95 1.8 0 1 1 7.4 5.9 C6.6 6.4 6.1 6.7 6.1 7.6" stroke="#fff" stroke-width="1.7" fill="none"/><rect x="5.2" y="8.4" width="1.8" height="1.6" fill="#fff"/></svg></div>
<div class="row" style="top:57.32px;background:#ffffff"><div class="pname nb" style="color:#262626">SSL Context Service</div><div class="pval nb" style="color:#aaaaaa">No value set</div><svg class="help" viewBox="0 0 12 12"><circle cx="6" cy="6" r="6" fill="#004849"/><path d="M4.1 4.6 A1.95 1.8 0 1 1 7.4 5.9 C6.6 6.4 6.1 6.7 6.1 7.6" stroke="#fff" stroke-width="1.7" fill="none"/><rect x="5.2" y="8.4" width="1.8" height="1.6" fill="#fff"/></svg></div>
<div class="row" style="top:86.08px;background:#f4f6f7"><div class="pname" style="font-weight:bold;color:#262626">Connection Timeout</div><div class="pval" style="font-weight:bold;color:#262626">5 secs</div><svg class="help" viewBox="0 0 12 12"><circle cx="6" cy="6" r="6" fill="#004849"/><path d="M4.1 4.6 A1.95 1.8 0 1 1 7.4 5.9 C6.6 6.4 6.1 6.7 6.1 7.6" stroke="#fff" stroke-width="1.7" fill="none"/><rect x="5.2" y="8.4" width="1.8" height="1.6" fill="#fff"/></svg></div>
<div class="row" style="top:114.84px;background:#ffffff"><div class="pname" style="font-weight:bold;color:#262626">Read Timeout</div><div class="pval" style="font-weight:bold;color:#262626">15 secs</div><svg class="help" viewBox="0 0 12 12"><circle cx="6" cy="6" r="6" fill="#004849"/><path d="M4.1 4.6 A1.95 1.8 0 1 1 7.4 5.9 C6.6 6.4 6.1 6.7 6.1 7.6" stroke="#fff" stroke-width="1.7" fill="none"/><rect x="5.2" y="8.4" width="1.8" height="1.6" fill="#fff"/></svg></div>
<div class="row" style="top:143.60px;background:#f4f6f7"><div class="pname" style="font-weight:bold;color:#262626">Idle Timeout</div><div class="pval" style="font-weight:bold;color:#262626">5 mins</div><svg class="help" viewBox="0 0 12 12"><circle cx="6" cy="6" r="6" fill="#004849"/><path d="M4.1 4.6 A1.95 1.8 0 1 1 7.4 5.9 C6.6 6.4 6.1 6.7 6.1 7.6" stroke="#fff" stroke-width="1.7" fill="none"/><rect x="5.2" y="8.4" width="1.8" height="1.6" fill="#fff"/></svg></div>
<div class="row" style="top:172.36px;background:#ffffff"><div class="pname" style="font-weight:bold;color:#262626">Max Idle Connections</div><div class="pval" style="font-weight:bold;color:#262626">5</div><svg class="help" viewBox="0 0 12 12"><circle cx="6" cy="6" r="6" fill="#004849"/><path d="M4.1 4.6 A1.95 1.8 0 1 1 7.4 5.9 C6.6 6.4 6.1 6.7 6.1 7.6" stroke="#fff" stroke-width="1.7" fill="none"/><rect x="5.2" y="8.4" width="1.8" height="1.6" fill="#fff"/></svg></div>
<div class="row" style="top:201.12px;background:#f4f6f7"><div class="pname" style="font-weight:bold;color:#262626">Include Date Header</div><div class="pval" style="font-weight:bold;color:#262626">True</div><svg class="help" viewBox="0 0 12 12"><circle cx="6" cy="6" r="6" fill="#004849"/><path d="M4.1 4.6 A1.95 1.8 0 1 1 7.4 5.9 C6.6 6.4 6.1 6.7 6.1 7.6" stroke="#fff" stroke-width="1.7" fill="none"/><rect x="5.2" y="8.4" width="1.8" height="1.6" fill="#fff"/></svg></div>
<div class="row" style="top:229.88px;background:#ffffff"><div class="pname" style="font-weight:bold;color:#262626">Follow Redirects</div><div class="pval" style="font-weight:bold;color:#262626">True</div><svg class="help" viewBox="0 0 12 12"><circle cx="6" cy="6" r="6" fill="#004849"/><path d="M4.1 4.6 A1.95 1.8 0 1 1 7.4 5.9 C6.6 6.4 6.1 6.7 6.1 7.6" stroke="#fff" stroke-width="1.7" fill="none"/><rect x="5.2" y="8.4" width="1.8" height="1.6" fill="#fff"/></svg></div>
<div class="row" style="top:258.64px;background:#f4f6f7"><div class="pname" style="font-weight:bold;color:#262626">Cookie Strategy</div><div class="pval" style="font-weight:bold;color:#262626">DISABLED</div><svg class="help" viewBox="0 0 12 12"><circle cx="6" cy="6" r="6" fill="#004849"/><path d="M4.1 4.6 A1.95 1.8 0 1 1 7.4 5.9 C6.6 6.4 6.1 6.7 6.1 7.6" stroke="#fff" stroke-width="1.7" fill="none"/><rect x="5.2" y="8.4" width="1.8" height="1.6" fill="#fff"/></svg></div>
<div class="row" style="top:287.40px;background:#ffffff"><div class="pname" style="font-weight:bold;color:#262626">Disable HTTP/2</div><div class="pval" style="font-weight:bold;color:#262626">False</div><svg class="help" viewBox="0 0 12 12"><circle cx="6" cy="6" r="6" fill="#004849"/><path d="M4.1 4.6 A1.95 1.8 0 1 1 7.4 5.9 C6.6 6.4 6.1 6.7 6.1 7.6" stroke="#fff" stroke-width="1.7" fill="none"/><rect x="5.2" y="8.4" width="1.8" height="1.6" fill="#fff"/></svg></div>
<div class="row" style="top:316.16px;background:#f4f6f7"><div class="pname" style="font-weight:bold;color:#262626">FlowFile Naming Strategy</div><div class="pval" style="font-weight:bold;color:#262626">RANDOM</div><svg class="help" viewBox="0 0 12 12"><circle cx="6" cy="6" r="6" fill="#004849"/><path d="M4.1 4.6 A1.95 1.8 0 1 1 7.4 5.9 C6.6 6.4 6.1 6.7 6.1 7.6" stroke="#fff" stroke-width="1.7" fill="none"/><rect x="5.2" y="8.4" width="1.8" height="1.6" fill="#fff"/></svg></div>
  <div class="row" style="top:344.9px;background:#fff"><svg class="help" viewBox="0 0 12 12"><circle cx="6" cy="6" r="6" fill="#004849"/></svg><div class="abs" style="left:39px;top:8px;width:1.5px;height:4px;background:#262626"></div><div class="abs" style="left:121px;top:8px;width:1.5px;height:4px;background:#262626"></div><div class="abs" style="left:395px;top:8px;width:1.5px;height:4px;background:#aaa"></div><div class="abs" style="left:432px;top:8px;width:1.5px;height:4px;background:#aaa"></div></div>
  <div class="abs" style="left:382px;top:0;width:1px;height:356px;background:#c7d2d7"></div>
  <div class="abs" style="left:763px;top:0;width:1px;height:356px;background:#c7d2d7"></div>
  <div class="abs" style="left:860px;top:2px;width:3px;height:105px;background:#8c8c8c;border-radius:1.5px"></div>
  </div>
  <div class="abs" style="left:785px;top:633px;width:127px;height:39px;background:#728e9b;color:#fff;font-size:13px;font-weight:bold;text-align:center;line-height:43px"><span style="display:inline-block;transform:scaleX(0.9)">OK</span></div>
</div>
</body></html>
